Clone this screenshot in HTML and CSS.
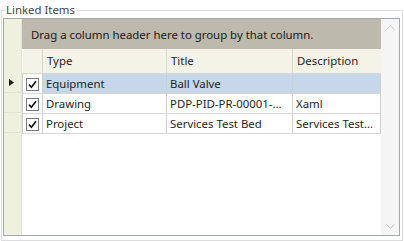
FILE: index.html
```html
<!DOCTYPE html>
<html lang="en">
<head>
  <meta charset="UTF-8">
  <title>Linked Items</title>
  <link rel="stylesheet" href="styles.css">
</head>
<body>

  <fieldset class="group-box">
    <legend>Linked Items</legend>

    <div class="grid">
      <div class="row-headers">
        <div class="rh-spacer"></div>
        <div class="rh-cell current">
          <svg width="5" height="7" viewBox="0 0 5 7"><path d="M0 0 L5 3.5 L0 7 Z" fill="#1a1a1a"/></svg>
        </div>
        <div class="rh-cell"></div>
        <div class="rh-cell"></div>
      </div>

      <div class="grid-main">
        <div class="group-panel">Drag a column header here to group by that column.</div>

        <table class="data">
          <thead>
            <tr>
              <th class="col-check"></th>
              <th class="col-type">Type</th>
              <th class="col-title">Title</th>
              <th class="col-desc">Description</th>
            </tr>
          </thead>
          <tbody>
            <tr class="selected">
              <td class="col-check"><span class="check"><svg width="9" height="9" viewBox="0 0 9 9"><path d="M1 4.6 L3.4 7.2 L8 1.2" fill="none" stroke="#111" stroke-width="1.6"/></svg></span></td>
              <td>Equipment</td>
              <td>Ball Valve</td>
              <td></td>
            </tr>
            <tr>
              <td class="col-check"><span class="check"><svg width="9" height="9" viewBox="0 0 9 9"><path d="M1 4.6 L3.4 7.2 L8 1.2" fill="none" stroke="#111" stroke-width="1.6"/></svg></span></td>
              <td>Drawing</td>
              <td>PDP-PID-PR-00001-...</td>
              <td>Xaml</td>
            </tr>
            <tr>
              <td class="col-check"><span class="check"><svg width="9" height="9" viewBox="0 0 9 9"><path d="M1 4.6 L3.4 7.2 L8 1.2" fill="none" stroke="#111" stroke-width="1.6"/></svg></span></td>
              <td>Project</td>
              <td>Services Test Bed</td>
              <td>Services Test...</td>
            </tr>
          </tbody>
        </table>
      </div>

      <div class="scrollbar">
        <svg width="9" height="5" viewBox="0 0 9 5"><path d="M0.5 4.5 L4.5 0.8 L8.5 4.5" fill="none" stroke="#c4c4c4" stroke-width="1"/></svg>
        <svg width="9" height="5" viewBox="0 0 9 5"><path d="M0.5 0.5 L4.5 4.2 L8.5 0.5" fill="none" stroke="#c4c4c4" stroke-width="1"/></svg>
      </div>
    </div>
  </fieldset>

</body>
</html>
```

FILE: styles.css
```css
* {
  box-sizing: border-box;
  font-family: "Noto Sans", "Open Sans", sans-serif;
}

body {
  margin: 0;
  padding: 3px 1px 0 1px;
  background: #ffffff;
  color: #1e1e1e;
  font-size: 11.4px;
}

.group-box {
  margin: 0;
  padding: 1px 0 4px 1px;
  border: 1px solid #dcdcdc;
}

.group-box legend {
  padding: 0 1px;
  margin-left: 2px;
  color: #444444;
  font-size: 11.4px;
  line-height: 14px;
}

.grid {
  display: flex;
  height: 218px;
  border: 1px solid #a3a9b0;
  background: #ffffff;
  width: 397px;
}

.row-headers {
  width: 18px;
  background: #f0f0df;
  border-right: 1px solid #e4e4d4;
  display: flex;
  flex-direction: column;
}

.rh-spacer {
  height: 54px;
}

.rh-cell {
  height: 20px;
  border-bottom: 1px solid #e2e2d2;
  display: flex;
  align-items: center;
  padding-left: 5px;
}

.grid-main {
  flex: 1;
  display: flex;
  flex-direction: column;
}

.group-panel {
  height: 30px;
  background: #bdb9ac;
  color: #1a1a1a;
  display: flex;
  align-items: center;
  padding-left: 9px;
}

table.data {
  border-collapse: collapse;
  width: 100%;
  table-layout: fixed;
}

th, td {
  text-align: left;
  font-weight: normal;
  padding: 0 0 0 3px;
  white-space: nowrap;
  overflow: hidden;
}

th {
  height: 24px;
  background: #f4f3e8;
  border-left: 1px solid #d9d8cc;
  border-bottom: 1px solid #d9d8cc;
  color: #1e1e1e;
  padding-left: 4px;
}

th.col-check {
  border-left: none;
}

td {
  height: 20px;
  border-left: 1px solid #cfcfcf;
  border-bottom: 1px solid #d6d6d6;
  border-right: 1px solid #cfcfcf;
}

.col-check {
  width: 20px;
  padding: 0;
  text-align: center;
}

.col-type {
  width: 124px;
}

.col-title {
  width: 126px;
}

tr.selected td {
  background: #c6d7ea;
}

tr.selected td.col-check {
  background: #ffffff;
}

.check {
  display: inline-flex;
  width: 13px;
  height: 13px;
  border: 1px solid #7a7a7a;
  background: #ffffff;
  align-items: center;
  justify-content: center;
  vertical-align: middle;
}

.scrollbar {
  width: 18px;
  background: #f5f5f5;
  display: flex;
  flex-direction: column;
  justify-content: space-between;
  align-items: center;
  padding: 6px 0 6px 0;
}
```
